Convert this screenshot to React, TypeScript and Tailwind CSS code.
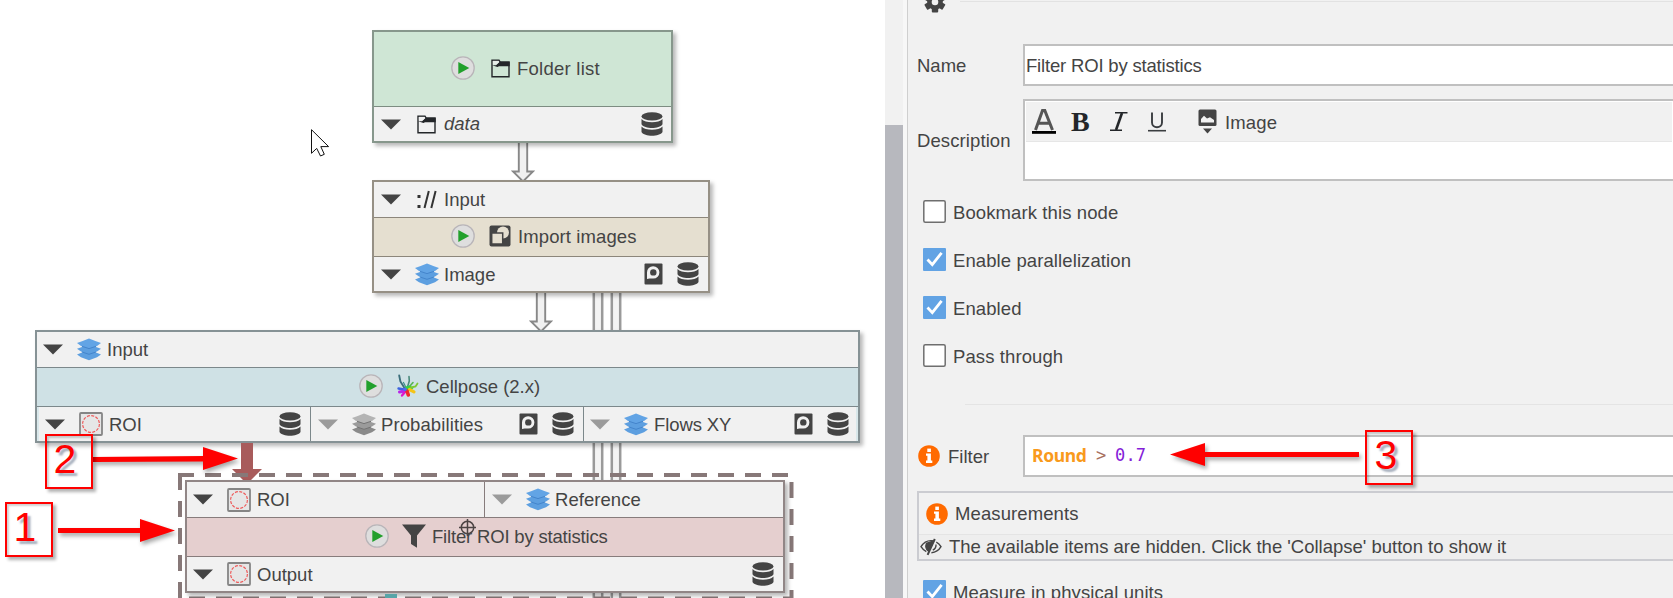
import React from "react";

type P = { className?: string };

const Triangle = ({ light }: { light?: boolean }) => (
  <svg width="20" height="11" viewBox="0 0 20 11" className="block shrink-0">
    <path d="M0 0.5H20L10 10.5Z" fill={light ? "#9b9b9b" : "#444444"} />
  </svg>
);

const Play = () => (
  <svg width="24" height="24" viewBox="0 0 24 24" className="block shrink-0">
    <circle cx="12" cy="12" r="11.2" fill="#dedede" stroke="#b9b5b9" strokeWidth="1.3" />
    <path d="M7.3 6L18.3 12L7.3 18Z" fill="#22a02c" />
  </svg>
);

const Folder = () => (
  <svg width="19" height="19" viewBox="0 0 19 19" className="block shrink-0">
    <path d="M1 17.7V1.2H8L9.2 3.2H18V17.7Z" fill="none" stroke="#232629" strokeWidth="1.4" />
    <path d="M9 2.5H18.7V7.2H8L6.5 8L1 6.2H5Z" fill="#232629" />
    <path d="M1.8 5.5H5.5L8.3 3L7.6 1.8H1.8Z" fill="#f1f1f1" fillOpacity="0.7" />
  </svg>
);

const Database = () => (
  <svg width="22" height="24" viewBox="0 0 22 24" className="block shrink-0" fill="#444444">
    <ellipse cx="11" cy="4.4" rx="10.5" ry="4.2" />
    <path d="M0.5 7C2.5 9.4 6.5 10.3 11 10.3S19.5 9.4 21.5 7V12.2C20 14.8 15.5 16 11 16S2 14.8 0.5 12.2Z" />
    <path d="M0.5 14.6C2.5 16.8 6.5 17.7 11 17.7S19.5 16.8 21.5 14.6V20C20 22.6 15.5 23.8 11 23.8S2 22.6 0.5 20Z" />
  </svg>
);

const CacheIcon = () => (
  <svg width="19" height="22" viewBox="0 0 19 22" className="block shrink-0">
    <rect x="0.5" y="0.5" width="18" height="21" rx="1" fill="#444444" />
    <path d="M3 16V9.5A6.2 6.2 0 1 1 9.3 15.6H5.5Z" fill="#f1f1f1" />
    <circle cx="9.3" cy="9.4" r="3.2" fill="#444444" />
  </svg>
);

const Layers = ({ gray }: { gray?: boolean }) => {
  const sheets = gray ? ["#8a8a8a", "#9b9b9b", "#b4b4b4"] : ["#5d9fe0", "#5d9fe0", "#62a4e5"];
  const edge = gray ? "#747474" : "#4485cc";
  return (
    <svg width="24" height="23" viewBox="0 0 24 23" className="block shrink-0">
      {[11.4, 5.7, 0].map((y, i) => (
        <g key={y} transform={`translate(0 ${y})`}>
          <path d="M0 5L5 3.2L12 0.6L19 3.2L24 5L20 7.9L12 10.8L4 7.9Z" fill={sheets[i]} />
          <path d="M5 8.3L12 10.6L19 8.3" fill="none" stroke={i ? edge : "none"} strokeWidth="1" />
        </g>
      ))}
    </svg>
  );
};

const RoiIcon = () => (
  <svg width="24" height="24" viewBox="0 0 24 24" className="block shrink-0">
    <rect x="1" y="1" width="22" height="22" rx="1" fill="#e6e6e6" stroke="#858585" strokeWidth="1.8" />
    <circle cx="12" cy="12" r="8.4" fill="none" stroke="#ee5b5b" strokeWidth="1.2" strokeDasharray="3 1.4" />
  </svg>
);

const ImportIcon = () => (
  <svg width="22" height="22" viewBox="0 0 22 22" className="block shrink-0">
    <rect x="0.5" y="0.5" width="21" height="21" rx="2" fill="#444444" />
    <circle cx="14" cy="7.5" r="6" fill="#e5dfd0" />
    <rect x="2.7" y="8" width="11" height="11" fill="#e5dfd0" stroke="#444444" strokeWidth="1.5" />
  </svg>
);

const Cellpose = () => (
  <svg width="22" height="24" viewBox="0 0 22 24" className="block shrink-0" fill="none" strokeLinecap="round">
    <path d="M2.2 1.5L3.4 7.5L7.5 14" stroke="#3c6f7c" strokeWidth="1.9" />
    <path d="M6.5 8.5L9 13.5" stroke="#3a8f8a" strokeWidth="1.2" />
    <path d="M12 2.5L12.3 7L10.8 12" stroke="#4a8a7c" strokeWidth="1.6" />
    <path d="M12.5 12.5L16 8.5" stroke="#58b552" strokeWidth="1.6" />
    <path d="M8 12.5L13 11.5L16.5 14L13.5 17L8.5 17Z" fill="#35d045" />
    <path d="M14 13.5L18.5 12.5L20.5 9.5" stroke="#7fc832" strokeWidth="1.8" />
    <path d="M12.5 15.5L17 17.8" stroke="#f5c416" strokeWidth="3.2" />
    <path d="M1.5 14.5L7 15.5" stroke="#3c63e0" strokeWidth="2.4" />
    <path d="M2.5 18L8 17" stroke="#b826e8" strokeWidth="3" />
    <path d="M5 21.5L8 18" stroke="#e016c8" strokeWidth="2.4" />
    <path d="M10 17L11.3 21" stroke="#f02a2a" strokeWidth="3.6" />
    <circle cx="8" cy="15.4" r="1.8" fill="#4a6cf0" />
  </svg>
);

const Funnel = () => (
  <svg width="24" height="24" viewBox="0 0 24 24" className="block shrink-0">
    <path d="M0 0.5H24L15 11.5V23.8L9 20V11.5Z" fill="#444444" />
  </svg>
);

const InfoIcon = () => (
  <svg width="22" height="22" viewBox="0 0 22 22" className="block shrink-0">
    <circle cx="11" cy="11" r="10.8" fill="#ff6a00" />
    <g fill="#fff">
      <rect x="9.3" y="3.6" width="3.6" height="3.4" />
      <path d="M8 8.5H12.9V15.6H14.3V18H8V15.6H9.4V10.8H8Z" />
    </g>
  </svg>
);

const EyeOff = () => (
  <svg width="22" height="18" viewBox="0 0 22 18" className="block shrink-0" fill="none" stroke="#444" strokeWidth="1.4">
    <path d="M6.3 13.6C4 12.6 2.3 10.8 1 8.7C3.2 5 7 2.6 11 2.6C12 2.6 12.9 2.7 13.8 3" />
    <path d="M6.5 5.2C5.2 8.5 6 11.8 8.5 13L13.8 3Z" fill="#444" />
    <path d="M14.8 1L7.6 16.8" strokeWidth="2" />
    <path d="M16.3 4.2C18.3 5.2 19.8 6.7 21 8.7C18.9 12.2 15.3 14.5 11.4 14.8" />
    <path d="M16 6.5C16.2 9 15 11 12.8 12.2" />
  </svg>
);

const Gear = () => (
  <svg width="22" height="22" viewBox="0 0 22 22" className="block shrink-0">
    <g fill="#444444">
      {[0, 60, 120].map((r) => (
        <rect key={r} x="7.8" y="0.6" width="6.4" height="21" rx="1" transform={`rotate(${r} 11 11)`} />
      ))}
      <circle cx="11" cy="11" r="7.8" />
    </g>
    <circle cx="11" cy="11" r="3.3" fill="#f1f1f1" />
  </svg>
);

const Row = ({ className = "", children }: P & { children: React.ReactNode }) => (
  <div className={`flex items-center ${className}`}>{children}</div>
);

const T = ({ className = "", children }: P & { children: React.ReactNode }) => (
  <span className={`whitespace-nowrap ${className}`}>{children}</span>
);

const Pipe = ({ className = "", arrow }: P & { arrow?: boolean }) => (
  <svg width="24" height="40" viewBox="0 0 24 40" className={`absolute ${className}`}>
    {arrow ? (
      <path d="M7.8 -2V28.5H2L12 38.5L22 28.5H16.2V-2" fill="#f1f1f1" stroke="#888" strokeWidth="1.9" />
    ) : (
      <>
        <rect x="8" width="8" height="40" fill="#f4f4f4" />
        <path d="M7.8 0V40M16.2 0V40" fill="none" stroke="#9a9a9a" strokeWidth="2.5" />
      </>
    )}
  </svg>
);

const Callout = ({ className = "", children }: P & { children: React.ReactNode }) => (
  <div
    className={`absolute flex h-[55px] w-12 justify-center border-2 border-[#ff0000] text-[41px] leading-[46px] text-[#ff0000] shadow-[3px_3px_3px_rgba(0,0,0,0.3),inset_2px_2px_2px_rgba(0,0,0,0.18)] [text-shadow:3px_3px_2px_rgba(60,80,110,0.45)] ${className}`}
  >
    {children}
  </div>
);

const Check = ({ on }: { on?: boolean }) => (
  <svg width="23" height="23" viewBox="0 0 23 23" className="block shrink-0">
    {on ? (
      <>
        <rect width="23" height="23" rx="1" fill="#62a3e4" />
        <path d="M4.5 11.5L9.3 16.6L18.6 4.8" fill="none" stroke="#fff" strokeWidth="2.8" />
      </>
    ) : (
      <rect x="0.8" y="0.8" width="21.4" height="21.4" rx="1.5" fill="#fff" stroke="#6e6e6e" strokeWidth="1.5" />
    )}
  </svg>
);

const Option = ({ on, children }: { on?: boolean; children: React.ReactNode }) => (
  <Row className="h-12 gap-[7px] pl-[9px]">
    <Check on={on} />
    <T className="pt-[3px] tracking-[0.1px]">{children}</T>
  </Row>
);

const nodeBase = "absolute flex flex-col border-2 bg-[#f1f1f1] shadow-[3px_3px_4px_rgba(0,0,0,0.28)]";

function Canvas() {
  return (
    <div className="relative h-full w-[885px] shrink-0 overflow-hidden bg-white">
      <Pipe arrow className="left-[511px] top-[143px]" />
      <Pipe arrow className="left-[529px] top-[293px]" />
      {["left-[586px] top-[293px]", "left-[604px] top-[293px]", "left-[586px] top-[443px]", "left-[604px] top-[443px]", "left-[586px] top-[593px]", "left-[604px] top-[593px]"].map((c) => (
        <Pipe key={c} className={c} />
      ))}

      <div className={`${nodeBase} left-[372px] top-[30px] h-[113px] w-[301px] border-[#87978c]`}>
        <Row className="h-[75px] border-b border-[#7d8d82] bg-[#cfe6d5] pb-0.5 pl-[77px]">
          <Play />
          <div className="ml-4"><Folder /></div>
          <T className="ml-[7px] pt-0.5 tracking-[0.25px]">Folder list</T>
        </Row>
        <Row className="flex-1 pl-[7px] pr-2">
          <Triangle />
          <div className="ml-4"><Folder /></div>
          <T className="ml-2 flex-1 italic">data</T>
          <Database />
        </Row>
      </div>

      <div className={`${nodeBase} left-[372px] top-[180px] h-[113px] w-[338px] border-[#969085]`}>
        <Row className="h-9 border-b border-[#8c867b] pl-[7px]">
          <Triangle />
          <svg width="20" height="20" viewBox="0 0 20 20" className="ml-4" fill="none" stroke="#333" strokeWidth="2">
            <path d="M7.5 18L11.8 1M14.3 18L18.6 1" />
            <path d="M0.5 6.5H3.5M0.5 16.5H3.5" strokeWidth="3" />
          </svg>
          <T className="ml-[7px] pt-px">Input</T>
        </Row>
        <Row className="h-[39px] border-b border-[#8c867b] bg-[#e5dfd0] pb-0.5 pl-[77px]">
          <Play />
          <div className="ml-3.5"><ImportIcon /></div>
          <T className="ml-[7px] pt-0.5 tracking-[0.1px]">Import images</T>
        </Row>
        <Row className="flex-1 pl-[7px] pr-[9px]">
          <Triangle />
          <div className="ml-3.5"><Layers /></div>
          <T className="ml-[5px] flex-1 pt-px">Image</T>
          <CacheIcon />
          <div className="ml-3.5"><Database /></div>
        </Row>
      </div>

      <div className={`${nodeBase} left-[35px] top-[330px] h-[113px] w-[825px] border-[#869295]`}>
        <Row className="h-9 border-b border-[#7c888b] pl-1.5">
          <Triangle />
          <div className="ml-3.5"><Layers /></div>
          <T className="ml-1.5 pt-px">Input</T>
        </Row>
        <Row className="h-[39px] border-b border-[#7c888b] bg-[#cfe1e5] pb-0.5 pl-[322px]">
          <Play />
          <div className="ml-3.5"><Cellpose /></div>
          <T className="ml-[7px] pt-0.5">Cellpose (2.x)</T>
        </Row>
        <div className="flex flex-1 border-x-2 border-[#d9e8eb]">
          <Row className="w-[272px] border-r border-[#7c888b] pl-1.5 pr-[9px]">
            <Triangle />
            <div className="ml-3.5"><RoiIcon /></div>
            <T className="ml-1.5 flex-1 pt-px">ROI</T>
            <Database />
          </Row>
          <Row className="w-[273px] border-r border-[#7c888b] pl-[7px] pr-[9px]">
            <Triangle light />
            <div className="ml-3.5"><Layers gray /></div>
            <T className="ml-[5px] flex-1 pt-px tracking-[0.1px]">Probabilities</T>
            <CacheIcon />
            <div className="ml-3.5"><Database /></div>
          </Row>
          <Row className="flex-1 pl-1.5 pr-[7px]">
            <Triangle light />
            <div className="ml-3.5"><Layers /></div>
            <T className="ml-1.5 flex-1 pt-px tracking-[-0.1px]">Flows XY</T>
            <CacheIcon />
            <div className="ml-3.5"><Database /></div>
          </Row>
        </div>
      </div>

      <svg width="30" height="42" viewBox="0 0 30 42" className="absolute left-[232px] top-[443px]">
        <path d="M9 0H21V26H30L15 41L0 26H9Z" fill="#a85b5b" />
      </svg>

      <svg width="620" height="128" viewBox="0 0 620 128" className="absolute left-[176px] top-[470px]" fill="none" stroke="#877878" strokeWidth="4" strokeDasharray="16 11">
        <path d="M2 5H614" />
        <path d="M4 4V128" />
        <path d="M615.5 12V128" />
        <path d="M13 128.5H614" />
      </svg>

      <div className={`${nodeBase} left-[185px] top-[480px] h-[113px] w-[600px] border-[#918686]`}>
        <div className="flex h-9 border-b border-[#877c7c]">
          <Row className="w-[298px] border-r border-[#877c7c] pl-1.5">
            <Triangle />
            <div className="ml-3.5"><RoiIcon /></div>
            <T className="ml-1.5 pt-px">ROI</T>
          </Row>
          <Row className="flex-1 pl-[7px]">
            <Triangle light />
            <div className="ml-3.5"><Layers /></div>
            <T className="ml-[5px] pt-px tracking-[0.05px]">Reference</T>
          </Row>
        </div>
        <Row className="h-[39px] border-b border-[#877c7c] bg-[#e5cfcf] pb-0.5 pl-[178px]">
          <Play />
          <div className="ml-[13px]"><Funnel /></div>
          <T className="ml-1.5 pt-0.5 tracking-[-0.18px]">Filter ROI by statistics</T>
        </Row>
        <Row className="flex-1 pl-1.5 pr-[9px]">
          <Triangle />
          <div className="ml-3.5"><RoiIcon /></div>
          <T className="ml-1.5 flex-1 pt-px">Output</T>
          <Database />
        </Row>
      </div>

      <div className="absolute left-[385px] top-[594px] h-1 w-3 bg-[#58a5a8]" />

      <svg width="17" height="17" viewBox="0 0 17 17" className="absolute left-[459px] top-[519px]" fill="none" stroke="#4c4444" strokeWidth="1.5">
        <circle cx="8.5" cy="8.5" r="6.2" />
        <path d="M8.5 0V17M0 8.5H17" />
      </svg>

      <svg width="20" height="28" viewBox="0 0 20 28" className="absolute left-[311px] top-[129px]">
        <path d="M0.5 0.7V24.3L5.7 19.4L9.5 27L13.3 25.3L9.8 17.6H17.6Z" fill="#fff" stroke="#111" strokeWidth="1" />
      </svg>

      <svg width="150" height="34" viewBox="0 0 150 34" className="absolute left-[92px] top-[443px] drop-shadow-[2px_3px_2px_rgba(0,0,0,0.35)]" fill="#ff0000">
        <path d="M1 14L111 13V4L146 15.5L111 27V18.5L1 19Z" />
      </svg>
      <svg width="120" height="34" viewBox="0 0 120 34" className="absolute left-[57px] top-[514px] drop-shadow-[2px_3px_2px_rgba(0,0,0,0.35)]" fill="#ff0000">
        <path d="M1 14H83V5L118 16.5L83 28V19H1Z" />
      </svg>
      <Callout className="left-[45px] top-[434px] pr-2">2</Callout>
      <Callout className="left-[5px] top-[502px] pr-2">1</Callout>
    </div>
  );
}

function Panel() {
  return (
    <div className="relative flex min-w-0 flex-1 flex-col overflow-hidden pl-[9px]">
      <div className="flex h-11 shrink-0">
        <div className="-mt-[9px] ml-[7px]"><Gear /></div>
        <div className="ml-3.5 mt-px h-px flex-1 bg-[#e2e2e2]" />
      </div>
      <div className="flex h-[55px] shrink-0 items-start">
        <T className="w-[106px] pt-2.5">Name</T>
        <Row className="h-[42px] flex-1 border-2 border-r-0 border-[#c0c0c0] bg-white pl-px pt-0.5">
          <T className="tracking-[-0.18px]">Filter ROI by statistics</T>
        </Row>
      </div>
      <div className="flex h-[88px] shrink-0 items-start">
        <T className="w-[106px] pt-[30px] tracking-[0.1px]">Description</T>
        <div className="h-[82px] flex-1 border-2 border-r-0 border-[#c0c0c0] bg-white p-px">
          <Row className="h-10 border-b border-[#e6e6e6] bg-[#f1f1f1] pl-1.5">
            <svg width="24" height="25" viewBox="0 0 24 25">
              <path d="M3.5 21L10.5 1.5H12.8L20.5 21M6.3 14.3H17.3" fill="none" stroke="#555" strokeWidth="3" />
              <rect y="22" width="24" height="2.8" fill="#000" />
            </svg>
            <T className="ml-[15px] w-6 font-['Liberation_Serif'] text-[28px] font-bold text-[#232629]">B</T>
            <svg width="18" height="19" viewBox="0 0 18 19" className="ml-[15px]" fill="none" stroke="#232629">
              <path d="M12 1L6 18" strokeWidth="2.6" />
              <path d="M5 0.8H17.5M0 18.2H12" strokeWidth="1.5" />
            </svg>
            <svg width="18" height="20" viewBox="0 0 18 20" className="ml-5" fill="none" stroke="#3a3d40">
              <path d="M4 0.5V10.5C4 16.8 14 16.8 14 10.5V0.5" strokeWidth="1.9" />
              <path d="M0 18.7H18" strokeWidth="1.6" />
            </svg>
            <svg width="19" height="25" viewBox="0 0 19 25" className="ml-8">
              <rect x="0.5" y="0.5" width="18" height="16.5" rx="1.5" fill="#444" />
              <path d="M3 13.5V10L6 6.8L9 9.5L12 8.2L16 11V13.5Z" fill="#f1f1f1" />
              <path d="M5 19.5H14L9.5 24.5Z" fill="#444" />
            </svg>
            <T className="ml-2 pt-0.5 tracking-[0.15px]">Image</T>
          </Row>
        </div>
      </div>
      <div className="-ml-[3px] flex h-[193px] shrink-0 flex-col">
        <Option>Bookmark this node</Option>
        <Option on>Enable parallelization</Option>
        <Option on>Enabled</Option>
        <Option>Pass through</Option>
      </div>
      <div className="ml-12 mt-6 h-px shrink-0 bg-[#e4e4e4]" />
      <div className="mt-[30px] flex h-14 shrink-0">
        <Row className="h-[42px] w-[106px] gap-2 pl-px">
          <InfoIcon />
          <T className="pt-px">Filter</T>
        </Row>
        <Row className="h-[42px] flex-1 border-2 border-r-0 border-[#c0c0c0] bg-white pb-[3px] pl-[7px] font-['DejaVu_Sans_Mono'] text-[17px]">
          <T className="w-[53px] font-['Noto_Sans'] text-[17.5px] font-bold tracking-[-0.35px] text-[#f99a1c]">Round</T>
          <T className="ml-[11px] w-[10px] text-[#a8705f]">&gt;</T>
          <T className="ml-[9px] tracking-[0.2px] text-[#8420d8]">0.7</T>
        </Row>
      </div>
      <div className="flex h-[70px] shrink-0 flex-col border-2 border-r-0 border-[#cbccd1]">
        <Row className="h-[43px] gap-[7px] border-b border-[#e4e4e4] pl-[7px]">
          <InfoIcon />
          <T className="pt-px tracking-[0.1px]">Measurements</T>
        </Row>
        <Row className="flex-1 gap-[7px] bg-[#eeeeee] pl-px">
          <EyeOff />
          <T>The available items are hidden. Click the 'Collapse' button to show it</T>
        </Row>
      </div>
      <div className="-ml-[3px] mt-[6px] shrink-0"><Option on>Measure in physical units</Option></div>

      <svg width="192" height="34" viewBox="0 0 192 34" className="absolute left-[261px] top-[438px] drop-shadow-[2px_3px_2px_rgba(0,0,0,0.35)]" fill="#ff0000">
        <path d="M1 16.5L36 5V14H190V19H36V28Z" />
      </svg>
      <Callout className="left-[457px] top-[430px] pr-1.5">3</Callout>
    </div>
  );
}

export default function App() {
  return (
    <div className="flex h-[598px] w-[1673px] overflow-hidden bg-[#f1f1f1] font-['Liberation_Sans',sans-serif] text-[18.5px] leading-6 text-[#444]">
      <Canvas />
      <div className="h-full w-[18px] shrink-0 bg-[#f1f1f1] pt-[125px]">
        <div className="h-full bg-[#b7b8be]" />
      </div>
      <div className="h-full w-[5px] shrink-0 border-r-[1.5px] border-[#cfcfcf] bg-[#f7f7f7]" />
      <Panel />
    </div>
  );
}
